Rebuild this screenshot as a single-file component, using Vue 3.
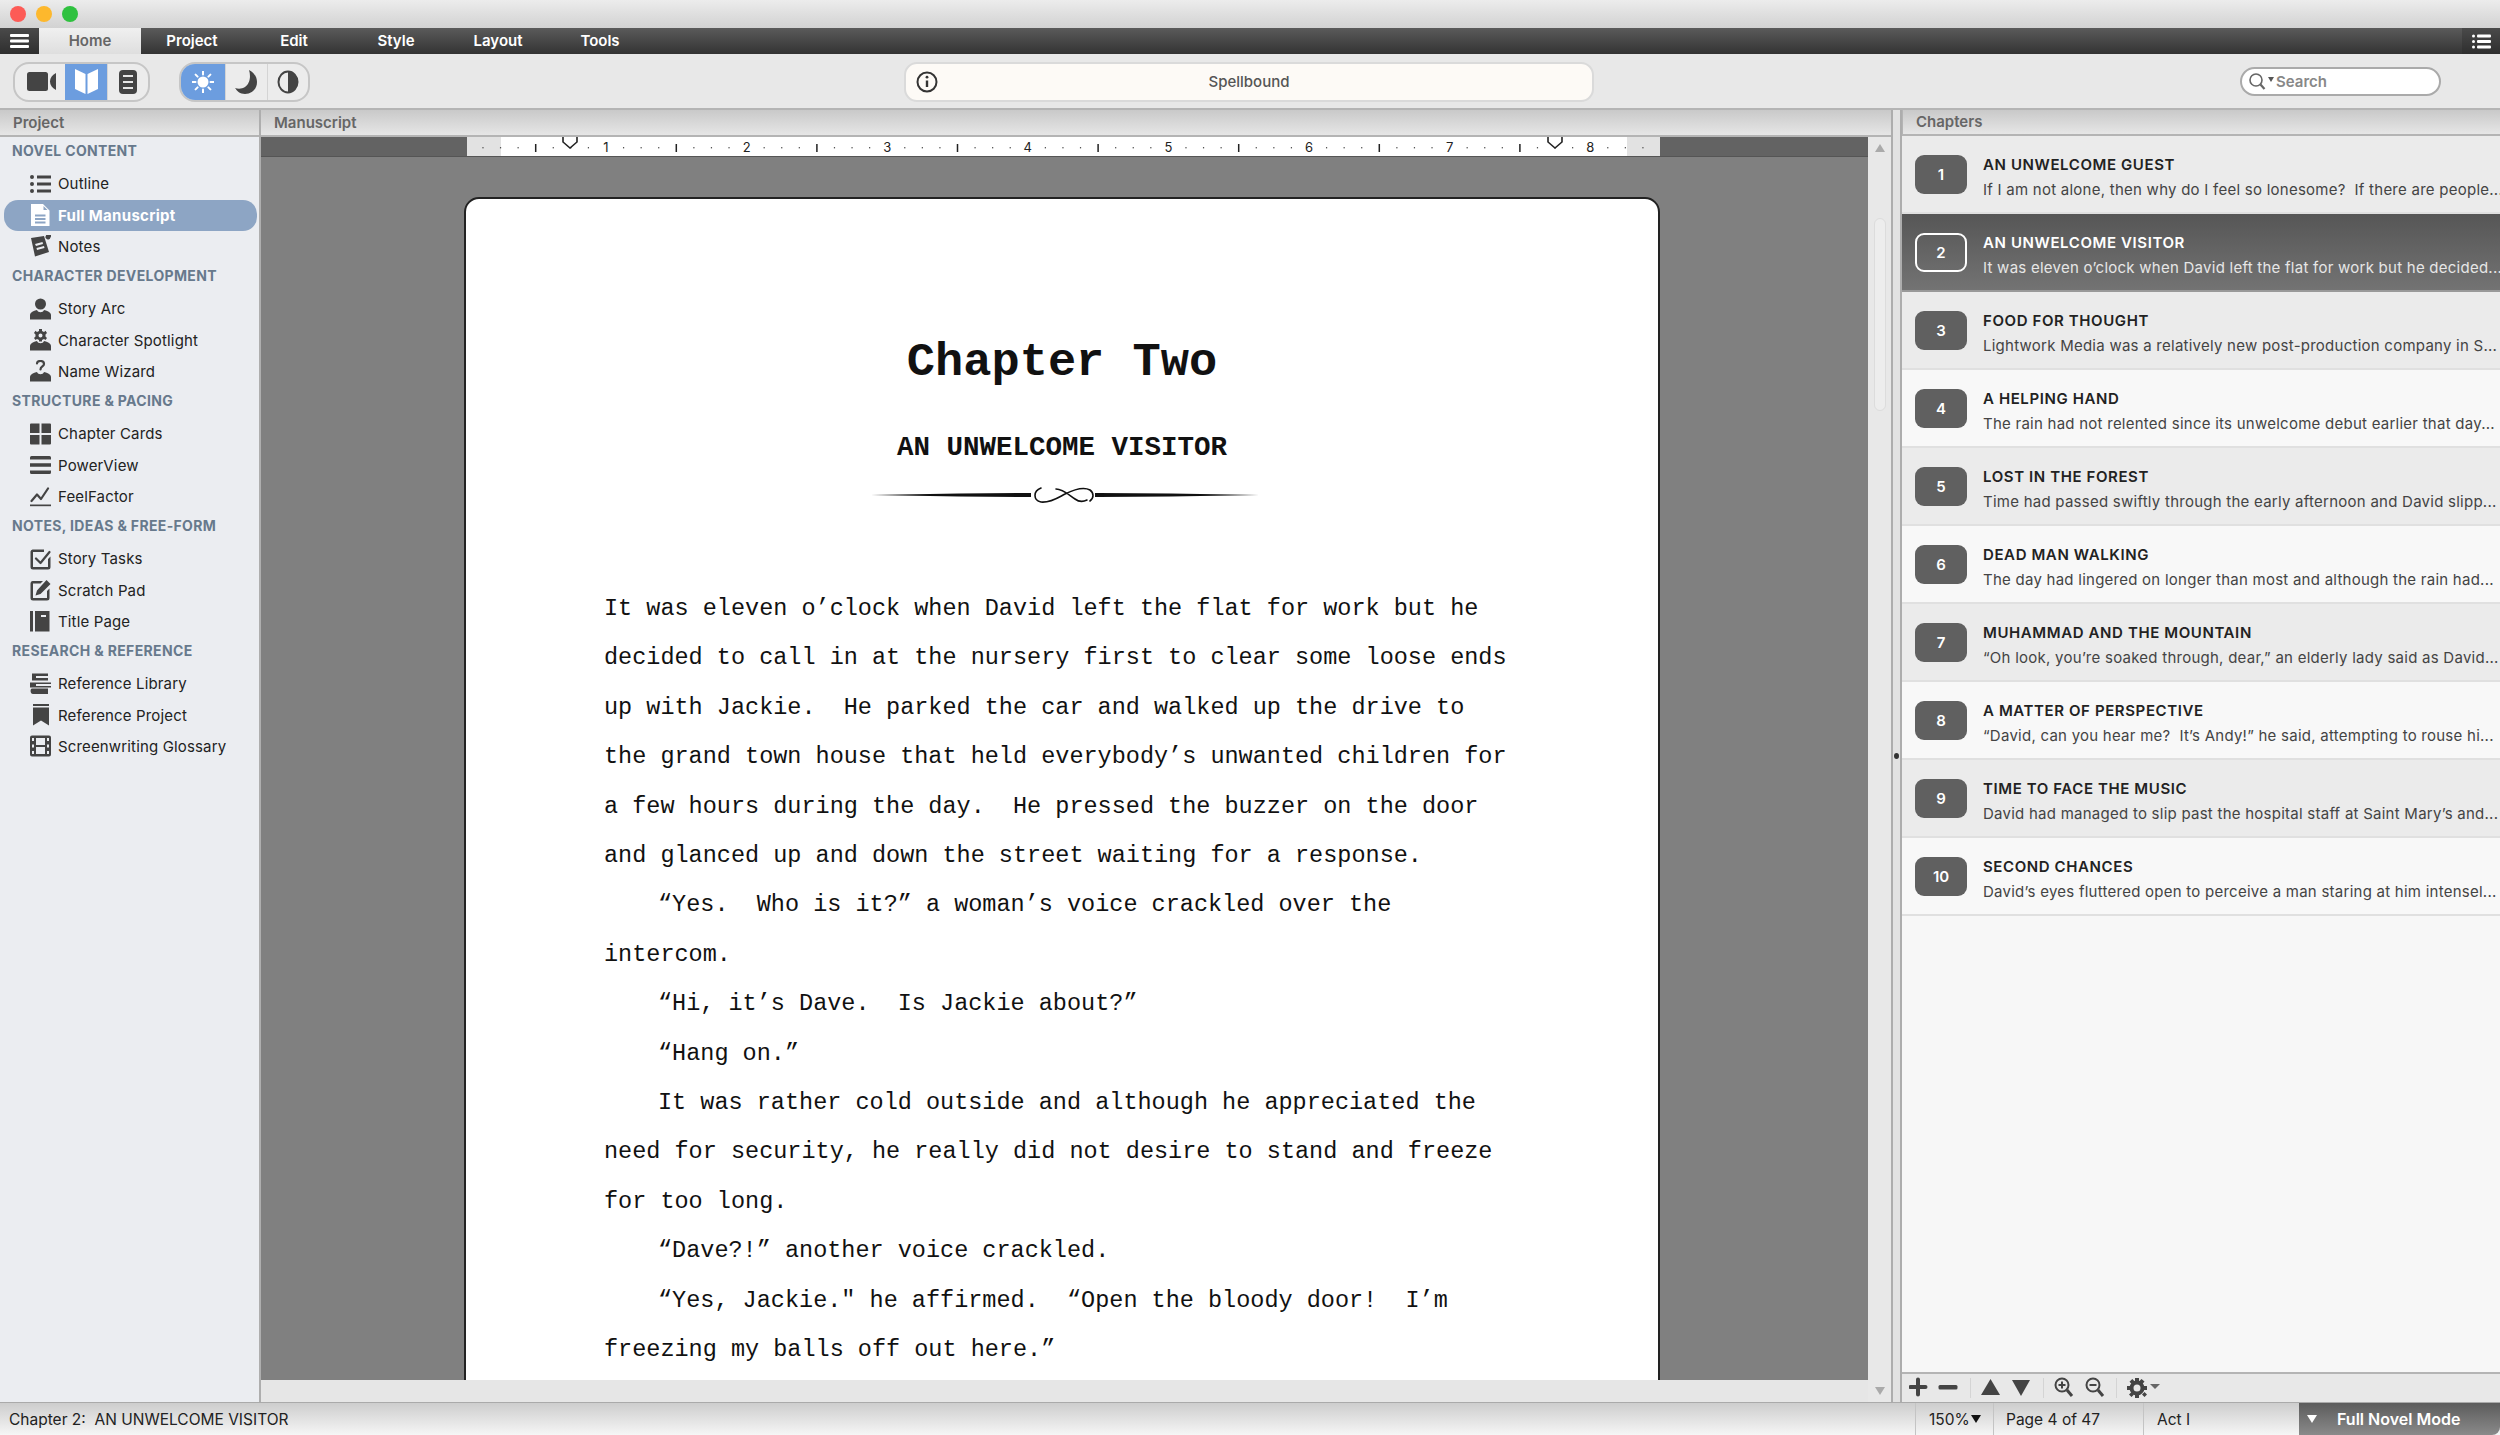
<template>
  <div class="app">
    <div class="titlebar">
      <i class="light light--red"></i>
      <i class="light light--yellow"></i>
      <i class="light light--green"></i>
    </div>

    <div class="ribbon">
      <div class="ribbon__menu">
        <svg width="19" height="14" viewBox="0 0 19 14" fill="#fff"><rect width="19" height="3" rx="1"/><rect y="5.5" width="19" height="3" rx="1"/><rect y="11" width="19" height="3" rx="1"/></svg>
      </div>
      <div v-for="t in tabs" :key="t" class="ribbon__tab" :class="{ 'ribbon__tab--on': t === 'Home' }">{{ t }}</div>
      <div class="ribbon__list">
        <svg width="19" height="15" viewBox="0 0 19 15" fill="#fff"><circle cx="1.5" cy="2" r="1.5"/><circle cx="1.5" cy="7.5" r="1.5"/><circle cx="1.5" cy="13" r="1.5"/><rect x="5" y="0.5" width="14" height="3" rx="1"/><rect x="5" y="6" width="14" height="3" rx="1"/><rect x="5" y="11.5" width="14" height="3" rx="1"/></svg>
      </div>
    </div>

    <div class="toolbar">
      <div class="seg seg--view">
        <div class="seg__cell seg__cell--w1">
          <svg width="29" height="19" viewBox="0 0 29 19" fill="#444"><rect width="21" height="19" rx="2.5"/><path d="M29 1C25 3 23 6 23 9.500C23 13 25 16 29 18Z"/></svg>
        </div>
        <div class="seg__cell seg__cell--w2 seg__cell--on">
          <svg width="23" height="25" viewBox="0 0 23 25" fill="#fff"><path d="M0 0L10.5 5V25L0 20Z"/><path d="M23 0L12.5 5V25L23 20Z"/></svg>
        </div>
        <div class="seg__cell seg__cell--w3">
          <svg width="18" height="24" viewBox="0 0 18 24"><rect width="18" height="24" rx="4" fill="#444"/><g fill="#e6e6e6"><rect x="4" y="5" width="10" height="2"/><rect x="4" y="11" width="10" height="2"/><rect x="4" y="17" width="10" height="2"/></g></svg>
        </div>
      </div>
      <div class="seg seg--mode">
        <div class="seg__cell seg__cell--w4 seg__cell--on">
          <svg width="22" height="22" viewBox="0 0 22 22" fill="#fff" stroke="#fff"><circle cx="11" cy="11" r="5.5" stroke="none"/><path d="M11 0.5V3.5M11 18.5V21.5M0.5 11H3.5M18.5 11H21.5M3.6 3.6L5.6 5.6M16.4 16.4L18.4 18.4M3.6 18.4L5.6 16.4M16.4 5.6L18.4 3.6" stroke-width="2" stroke-linecap="round"/></svg>
        </div>
        <div class="seg__cell seg__cell--w5">
          <svg width="22" height="24" viewBox="0 0 22 24" fill="#444"><path d="M14 0C20 3 22 8 22 12C22 19 17 24 10 24C5 24 2 21 0 18C3 19 7 19 10 17C15 14 16 6 14 0Z"/></svg>
        </div>
        <div class="seg__cell seg__cell--w5">
          <svg width="22" height="24" viewBox="0 0 22 24"><ellipse cx="11" cy="12" rx="9.5" ry="10.5" fill="none" stroke="#444" stroke-width="2"/><path d="M11 1.5A9.5 10.5 0 0 1 11 22.5Z" fill="#444"/></svg>
        </div>
      </div>
      <div class="banner">
        <svg class="banner__icon" width="22" height="22" viewBox="0 0 22 22" fill="none" stroke="#333"><circle cx="11" cy="11" r="9.5" stroke-width="2"/><path d="M11 9.5V16" stroke-width="2.4"/><circle cx="11" cy="6.2" r="1.4" fill="#333" stroke="none"/></svg>
        <span class="banner__text">Spellbound</span>
      </div>
      <div class="search">
        <svg width="26" height="20" viewBox="0 0 26 20" fill="none" stroke="#666"><circle cx="8" cy="8" r="6" stroke-width="1.6"/><path d="M12.5 12.5L16.5 17" stroke-width="2.2"/><path d="M20 5H26L23 10Z" fill="#555" stroke="none"/></svg>
        <span>Search</span>
      </div>
    </div>

    <div class="main">
      <aside class="project">
        <div class="head head--project">Project</div>
        <div class="nav">
          <section v-for="g in nav" :key="g.title">
            <div class="nav__title">{{ g.title }}</div>
            <div v-for="it in g.items" :key="it.label" class="nav__item" :class="{ 'nav__item--on': it.label === 'Full Manuscript' }">
              <svg class="nav__icon" width="21" height="22" viewBox="0 0 21 22">
                <path v-if="icons[it.icon].f" :d="icons[it.icon].f" fill="currentColor" fill-rule="evenodd"/>
                <path v-if="icons[it.icon].s" :d="icons[it.icon].s" fill="none" stroke="currentColor" stroke-width="2.2" stroke-linecap="round" stroke-linejoin="round"/>
              </svg>
              <span>{{ it.label }}</span>
            </div>
          </section>
        </div>
      </aside>

      <div class="manuscript">
        <div class="head head--manuscript">Manuscript</div>
        <div class="manuscript__body">
          <div class="editor">
            <div class="ruler-strip">
              <svg class="ruler" width="1193" height="19" viewBox="0 0 1193 19">
                <rect width="1193" height="19" fill="#fff"/>
                <rect width="34" height="19" fill="#e2e2e2"/>
                <rect x="1160" width="33" height="19" fill="#e2e2e2"/>
                <template v-for="m in rulerMarks" :key="m.x">
                  <text v-if="m.kind === 'digit'" :x="m.x" y="15" text-anchor="middle" class="ruler__digit">{{ m.label }}</text>
                  <rect v-else-if="m.kind === 'tick'" :x="m.x - 0.75" y="7" width="1.5" height="8" fill="#222"/>
                  <rect v-else :x="m.x - 0.6" y="10" width="1.2" height="1.4" fill="#555"/>
                </template>
                <path d="M96 0V5L103 11L110 5V0" fill="#fff" stroke="#222" stroke-width="1.6"/>
                <path d="M1081 0V5L1088 11L1095 5V0" fill="#fff" stroke="#222" stroke-width="1.6"/>
              </svg>
            </div>
            <div class="desk">
              <div class="page">
                <h1 class="page__chapter">Chapter Two</h1>
                <h2 class="page__title">AN UNWELCOME VISITOR</h2>
                <svg class="page__rule" width="392" height="20" viewBox="0 0 392 20">
                  <path d="M2 10L90 8.6L158 8H162V12H158L90 11.4Z" fill="#111"/>
                  <path d="M390 10L302 8.6L230 8H226V12H230L302 11.4Z" fill="#111"/>
                  <path d="M172 3C164 6 164 15 172 17C182 18 190 12 196 9C204 5 214 1 221 5C225 8 225 13 221 16M187 4C194 4 200 10 206 14C210 17 214 17 218 15" fill="none" stroke="#111" stroke-width="1.6" stroke-linecap="round"/>
                </svg>
                <div class="page__text">
                  <div v-for="(l, i) in lines" :key="i" class="page__line" :class="{ 'page__line--indent': l.startsWith(' ') }">{{ l.trimStart() }}</div>
                </div>
              </div>
            </div>
          </div>
          <div class="vscroll">
            <span class="arrow arrow--up"></span>
            <div class="vscroll__track"><div class="vscroll__thumb"></div></div>
            <span class="arrow arrow--down"></span>
          </div>
        </div>
      </div>

      <div class="divider"><i class="divider__grip"></i></div>

      <aside class="chapters">
        <div class="head head--chapters">Chapters</div>
        <div class="chapters__list">
          <div v-for="(c, i) in chapters" :key="c.title" class="chapter" :class="{ 'chapter--on': i === 1, 'chapter--alt': i % 2 === 0 }">
            <div class="chapter__num">{{ i + 1 }}</div>
            <div class="chapter__text">
              <div class="chapter__title">{{ c.title }}</div>
              <div class="chapter__sub">{{ c.sub }}</div>
            </div>
          </div>
        </div>
        <div class="chapters__tools">
          <svg width="255" height="24" viewBox="0 0 255 24" fill="#444">
            <path d="M6 4.5a2 2 0 0 1 4 0V10h5.5a2 2 0 0 1 0 4H10v5.500a2 2 0 0 1-4 0V14H.5a2 2 0 0 1 0-4H6Z" transform="translate(1 0)"/>
            <rect x="29.500" y="10" width="19" height="4.500" rx="1.500"/>
            <g transform="translate(6 0)">
              <rect x="55" y="3" width="1" height="20" fill="#d4d4d4"/>
              <path d="M66 20L75.500 4L85 20Z"/>
              <path d="M97 5H115L106 21Z"/>
              <rect x="128" y="3" width="1" height="20" fill="#d4d4d4"/>
              <g fill="none" stroke="#444">
                <circle cx="147" cy="10" r="6.500" stroke-width="2"/>
                <path d="M152 15L157 21" stroke-width="3"/>
                <path d="M143.500 10H150.500M147 6.500V13.500" stroke-width="2"/>
                <circle cx="178" cy="10" r="6.500" stroke-width="2"/>
                <path d="M183 15L188 21" stroke-width="3"/>
                <path d="M174.500 10H181.500" stroke-width="2"/>
              </g>
              <rect x="201" y="3" width="1" height="20" fill="#d4d4d4"/>
              <g transform="translate(213 3)">
                <circle cx="9" cy="10" r="5.500" fill="none" stroke="#444" stroke-width="4"/>
                <path d="M7 0H11V4H7ZM7 16H11V20H7ZM-1 8H3V12H-1ZM15 8H19V12H15ZM1.500 3.800L4.300 1L7 3.800L4.300 6.500ZM14 16.500L16.500 14L19 16.500L16.500 19ZM1 16.500L3.500 14L6 16.500L3.500 19ZM11 3.500L13.500 1L16.500 3.500L14 6.500Z"/>
              </g>
              <path d="M235 9H245L240 14Z" fill="#666"/>
            </g>
          </svg>
        </div>
      </aside>
    </div>

    <div class="status">
      <div class="status__chapter">{{ statusText }}</div>
      <div class="status__cell status__cell--zoom">150%<i class="status__caret"></i></div>
      <div class="status__cell status__cell--page">Page 4 of 47</div>
      <div class="status__cell status__cell--act">Act I</div>
      <div class="status__mode"><i class="status__modecaret"></i>Full Novel Mode</div>
    </div>
  </div>
</template>

<script setup>
const tabs = ['Home', 'Project', 'Edit', 'Style', 'Layout', 'Tools']
const statusText = 'Chapter 2:  AN UNWELCOME VISITOR'

const person = 'M0 21.500V17C0 14 5 12.500 7 12C8 15 13 15 14 12C16 12.500 21 14 21 17V21.500Z'

const icons = {
  outline: { f: 'M0 4a2 2 0 1 0 4 0a2 2 0 1 0-4 0ZM0 11a2 2 0 1 0 4 0a2 2 0 1 0-4 0ZM0 18a2 2 0 1 0 4 0a2 2 0 1 0-4 0ZM7 2.500H21V5.500H7ZM7 9.500H21V12.500H7ZM7 16.500H21V19.500H7Z' },
  doc: { f: 'M1 0H13L19.500 6.500V22H1ZM5 10.500V12.500H15.500V10.500ZM5 14V16H15.500V14ZM5 17.500V19.500H15.500V17.500ZM13.500 2V6H17.500Z' },
  note: { f: 'M1 3L14 1L19 17L5 21.500ZM5 9L6 11L13 9L12.500 7ZM6.500 13L7 15L14.500 13L14 11ZM16 0.500a2.500 2.500 0 1 0 4.500 2a2.500 2.500 0 1 0-4.500-2Z' },
  person: { f: person + 'M5 6a5.500 5.500 0 1 0 11 0a5.500 5.500 0 1 0-11 0Z' },
  spot: { f: person + 'M9 0H12V2L14 3L15.500 1.800L17 4L15.500 5.500V7.500L17 9L15.500 11L14 10L12 11V12.500H9V11L7 10L5.500 11L4 9L5.500 7.500V5.500L4 4L5.500 1.800L7 3L9 2ZM8.500 6.500a2 2 0 1 0 4 0a2 2 0 1 0-4 0Z' },
  wizard: { f: person, s: 'M7 3.500C7 0 14 0 14 4C14 6.500 10.500 6.500 10.500 9.500' },
  cards: { f: 'M0 1.500A1 1 0 0 1 1 .5H9.500V10H0ZM11.500 .5H20A1 1 0 0 1 21 1.500V10H11.500ZM0 12H9.500V21.500H1A1 1 0 0 1 0 20.500ZM11.500 12H21V20.500A1 1 0 0 1 20 21.500H11.500Z' },
  power: { f: 'M0 3.500A1.500 1.500 0 0 1 1.500 2H19.500A1.500 1.500 0 0 1 21 3.500V5.500H0ZM0 9.300H21V12.700H0ZM0 16.500H21V18.500A1.500 1.500 0 0 1 19.500 20H1.500A1.500 1.500 0 0 1 0 18.500Z' },
  feel: { f: 'M0 19.500H21V21.200H0Z', s: 'M1.500 16L7 9.500L11 14L18 3.500' },
  tasks: { f: 'M2.500 1.500H14V4H3V19H18V11L20.500 8.500V19A2.500 2.500 0 0 1 18 21.500H3A2.500 2.500 0 0 1 .5 19V3.500A2.500 2.500 0 0 1 2.500 1.500Z', s: 'M6 10.500L10.500 15L19.500 4' },
  pad: { f: 'M2.500 2H13L10.500 4.500H3V19H17V12L19.500 9.500V19A2.500 2.500 0 0 1 17 21.500H3A2.500 2.500 0 0 1 .5 19V4.500A2.500 2.500 0 0 1 2.500 2ZM16.500 1L20.500 5L10.500 15L5.500 16.500L7 11.500Z' },
  title: { f: 'M0 1H3V21.500H0ZM5 1H19.500V21.500H5ZM11 5V7H16V5Z' },
  library: { f: 'M2 .5H18V3H6V5H18V7.500H2ZM0 9.500H21V11H6V13H21V14.500H0ZM2 15.500H18V21H3C0 21 0 15.500 2 15.500Z' },
  bookmark: { f: 'M3 0H19V2H3ZM3 3.500H19V21.500L11 16.500L3 21.500Z' },
  film: { f: 'M2 .5H19A2 2 0 0 1 21 2.500V19.500A2 2 0 0 1 19 21.500H2A2 2 0 0 1 0 19.500V2.500A2 2 0 0 1 2 .5ZM2 3V6H4V3ZM2 9.500V12.500H4V9.500ZM2 16V19H4V16ZM17 3V6H19V3ZM17 9.500V12.500H19V9.500ZM17 16V19H19V16ZM6 3V10H15V3ZM6 12V19H15V12Z' },
}

const nav = [
  { title: 'NOVEL CONTENT', items: [
    { label: 'Outline', icon: 'outline' },
    { label: 'Full Manuscript', icon: 'doc' },
    { label: 'Notes', icon: 'note' },
  ] },
  { title: 'CHARACTER DEVELOPMENT', items: [
    { label: 'Story Arc', icon: 'person' },
    { label: 'Character Spotlight', icon: 'spot' },
    { label: 'Name Wizard', icon: 'wizard' },
  ] },
  { title: 'STRUCTURE & PACING', items: [
    { label: 'Chapter Cards', icon: 'cards' },
    { label: 'PowerView', icon: 'power' },
    { label: 'FeelFactor', icon: 'feel' },
  ] },
  { title: 'NOTES, IDEAS & FREE-FORM', items: [
    { label: 'Story Tasks', icon: 'tasks' },
    { label: 'Scratch Pad', icon: 'pad' },
    { label: 'Title Page', icon: 'title' },
  ] },
  { title: 'RESEARCH & REFERENCE', items: [
    { label: 'Reference Library', icon: 'library' },
    { label: 'Reference Project', icon: 'bookmark' },
    { label: 'Screenwriting Glossary', icon: 'film' },
  ] },
]

// eighth-inch marks along the ruler
const rulerMarks = []
for (let k = 1; k <= 67; k++) {
  const x = k * 17.575 - 1.6
  if (k % 8 === 0) rulerMarks.push({ x, kind: 'digit', label: k / 8 })
  else if (k % 4 === 0) rulerMarks.push({ x, kind: 'tick' })
  else rulerMarks.push({ x, kind: 'dot' })
}

const lines = [
  'It was eleven o’clock when David left the flat for work but he',
  'decided to call in at the nursery first to clear some loose ends',
  'up with Jackie.  He parked the car and walked up the drive to',
  'the grand town house that held everybody’s unwanted children for',
  'a few hours during the day.  He pressed the buzzer on the door',
  'and glanced up and down the street waiting for a response.',
  '    “Yes.  Who is it?” a woman’s voice crackled over the',
  'intercom.',
  '    “Hi, it’s Dave.  Is Jackie about?”',
  '    “Hang on.”',
  '    It was rather cold outside and although he appreciated the',
  'need for security, he really did not desire to stand and freeze',
  'for too long.',
  '    “Dave?!” another voice crackled.',
  '    “Yes, Jackie." he affirmed.  “Open the bloody door!  I’m',
  'freezing my balls off out here.”',
]

const chapters = [
  { title: 'AN UNWELCOME GUEST', sub: 'If I am not alone, then why do I feel so lonesome?  If there are people...' },
  { title: 'AN UNWELCOME VISITOR', sub: 'It was eleven o’clock when David left the flat for work but he decided...' },
  { title: 'FOOD FOR THOUGHT', sub: 'Lightwork Media was a relatively new post-production company in S...' },
  { title: 'A HELPING HAND', sub: 'The rain had not relented since its unwelcome debut earlier that day...' },
  { title: 'LOST IN THE FOREST', sub: 'Time had passed swiftly through the early afternoon and David slipp...' },
  { title: 'DEAD MAN WALKING', sub: 'The day had lingered on longer than most and although the rain had...' },
  { title: 'MUHAMMAD AND THE MOUNTAIN', sub: '“Oh look, you’re soaked through, dear,” an elderly lady said as David...' },
  { title: 'A MATTER OF PERSPECTIVE', sub: '“David, can you hear me?  It’s Andy!” he said, attempting to rouse hi...' },
  { title: 'TIME TO FACE THE MUSIC', sub: 'David had managed to slip past the hospital staff at Saint Mary’s and...' },
  { title: 'SECOND CHANCES', sub: 'David’s eyes fluttered open to perceive a man staring at him intensel...' },
]
</script>

<style>
html, body { margin: 0; background: #e8e8e8; }
</style>

<style scoped>
.app {
  width: 2500px;
  height: 1435px;
  display: flex;
  flex-direction: column;
  overflow: hidden;
  font-family: Inter, Roboto, 'Liberation Sans', sans-serif;
  color: #222;
}

.titlebar {
  height: 28px;
  flex: none;
  display: flex;
  align-items: center;
  gap: 10px;
  padding-left: 10px;
  box-sizing: border-box;
  background: linear-gradient(#ececec, #d2d2d2);
}
.light { width: 16px; height: 16px; border-radius: 50%; }
.light--red { background: #fd5b56; }
.light--yellow { background: #fdb82d; }
.light--green { background: #2fc13f; }

.ribbon {
  height: 26px;
  flex: none;
  display: flex;
  background: linear-gradient(#5a5a5a, #333);
}
.ribbon__menu {
  width: 39px;
  display: flex;
  align-items: center;
  justify-content: center;
  background: linear-gradient(#4a4a4a, #2e2e2e);
}
.ribbon__tab {
  width: 102px;
  text-align: center;
  font-size: 15px;
  font-weight: 600;
  line-height: 26px;
  color: #fff;
}
.ribbon__tab--on {
  color: #666;
  background: linear-gradient(#f0f0f0, #dedede);
}
.ribbon__list {
  margin-left: auto;
  width: 38px;
  display: flex;
  align-items: center;
  justify-content: center;
  background: linear-gradient(#4a4a4a, #2e2e2e);
}

.toolbar {
  height: 56px;
  flex: none;
  box-sizing: border-box;
  padding: 8px 59px 7px 13px;
  display: flex;
  align-items: center;
  background: #e8e8e8;
  border-bottom: 2px solid #b4b4b4;
}
.seg {
  height: 40px;
  box-sizing: border-box;
  display: flex;
  overflow: hidden;
  border: 2px solid #c6c6c6;
  border-radius: 16px;
  background: #ececec;
}
.seg--view { width: 137px; }
.seg--mode { width: 131px; margin-left: 29px; }
.seg__cell {
  display: flex;
  align-items: center;
  justify-content: center;
  box-sizing: border-box;
  border-left: 1px solid #d4d4d4;
}
.seg__cell:first-child { border-left: 0; }
.seg__cell--w1 { width: 50px; padding-left: 2px; }
.seg__cell--w2 { width: 42px; }
.seg__cell--w3 { flex: 1; }
.seg__cell--w4 { width: 44px; }
.seg__cell--w5 { flex: 1; }
.seg__cell--on { background: #6c9ddf; border-left: 0; }

.banner {
  position: relative;
  width: 690px;
  height: 40px;
  margin-left: 594px;
  box-sizing: border-box;
  display: flex;
  align-items: center;
  justify-content: center;
  background: #fdfaf6;
  border: 2px solid #dadada;
  border-radius: 13px;
}
.banner__icon { position: absolute; left: 10px; top: 7px; }
.banner__text { font-size: 15px; font-weight: 500; color: #555; }

.search {
  width: 201px;
  height: 29px;
  margin-left: auto;
  box-sizing: border-box;
  padding-left: 6px;
  display: flex;
  align-items: center;
  gap: 2px;
  background: #fff;
  border: 2px solid #aaa;
  border-radius: 15px;
  font-size: 15px;
  font-weight: 600;
  color: #888;
}

.main {
  flex: 1;
  min-height: 0;
  display: flex;
}

.head {
  flex: none;
  box-sizing: border-box;
  background: linear-gradient(#c9c9c9, #e6e6e6);
  font-size: 15px;
  font-weight: 600;
  color: #666;
  border-bottom: 2px solid #b4b4b4;
}
.head--project { height: 27px; line-height: 25px; padding-left: 13px; }
.head--manuscript { height: 27px; line-height: 25px; padding-left: 13px; }
.head--chapters { height: 26px; line-height: 24px; padding-left: 13px; border-left: 1px solid #b4b4b4; }

.project {
  width: 261px;
  flex: none;
  box-sizing: border-box;
  display: flex;
  flex-direction: column;
  border-right: 2px solid #aeaeae;
  background: #ebedf1;
}
.nav { flex: 1; }
.nav__title {
  height: 31.25px;
  line-height: 28px;
  padding-left: 12px;
  font-size: 14px;
  font-weight: 700;
  letter-spacing: 0.35px;
  color: #67798c;
  white-space: nowrap;
}
.nav__item {
  height: 31.25px;
  margin: 0 2px 0 4px;
  box-sizing: border-box;
  padding-left: 26px;
  display: flex;
  align-items: center;
  gap: 7px;
  font-size: 15px;
  letter-spacing: 0.15px;
  color: #222;
  white-space: nowrap;
  border-radius: 14px;
}
.nav__icon { color: #444; flex: none; }
.nav__item--on { background: #8da5c4; color: #fff; font-weight: 700; letter-spacing: 0.3px; }
.nav__item--on .nav__icon { color: #fff; }

.manuscript {
  width: 1630px;
  flex: none;
  display: flex;
  flex-direction: column;
}
.manuscript__body {
  flex: 1;
  min-height: 0;
  display: flex;
}
.editor {
  width: 1607px;
  flex: none;
  display: flex;
  flex-direction: column;
  border-bottom: 22px solid #e6e6e6;
  box-sizing: border-box;
  background: #808080;
}
.ruler-strip {
  height: 20px;
  flex: none;
  background: #636363;
  border-bottom: 1px solid #555;
  box-sizing: border-box;
  padding-left: 206px;
}
.ruler { display: block; }
.ruler__digit { font: 400 13px Inter, Roboto, sans-serif; fill: #222; }
.desk {
  flex: 1;
  min-height: 0;
  overflow: hidden;
  padding: 40px 0 0 203px;
}
.page {
  width: 1196px;
  height: 1300px;
  box-sizing: border-box;
  padding: 0 0 0 138px;
  background: #fff;
  border: 2px solid #222;
  border-radius: 15px 15px 0 0;
  color: #111;
  font-family: 'Liberation Mono', 'Courier New', monospace;
}
.page__chapter {
  margin: 0 0 0 -138px;
  padding-top: 136px;
  text-align: center;
  font-size: 47px;
  font-weight: 700;
  line-height: 56px;
}
.page__title {
  margin: 41px 0 0 -138px;
  text-align: center;
  font-size: 27.500px;
  font-weight: 700;
  line-height: 32px;
}
.page__rule {
  display: block;
  margin: 21px 0 0 265px;
}
.page__text {
  margin-top: 79px;
  font-size: 23.500px;
}
.page__line {
  height: 49.420px;
  line-height: 49.420px;
  white-space: pre;
}
.page__line--indent { padding-left: 54px; }

.vscroll {
  flex: 1;
  display: flex;
  flex-direction: column;
  align-items: center;
  background: #e8e8e8;
}
.vscroll__track { flex: 1; width: 100%; }
.vscroll__thumb {
  width: 12px;
  height: 193px;
  margin: 66px 0 0 6px;
  box-sizing: border-box;
  background: #ededed;
  border: 1px solid #dcdcdc;
  border-radius: 6px;
}
.arrow { width: 0; height: 0; flex: none; border-left: 5px solid transparent; border-right: 5px solid transparent; }
.arrow--up { margin-top: 7px; border-bottom: 8px solid #aaa; }
.arrow--down { margin-bottom: 7px; border-top: 8px solid #aaa; }

.divider {
  position: relative;
  width: 11px;
  flex: none;
  box-sizing: border-box;
  background: #e2e2e2;
  border-left: 2px solid #adadad;
  border-right: 2px solid #adadad;
}
.divider__grip {
  position: absolute;
  left: 1px;
  top: 643px;
  width: 5px;
  height: 6px;
  border-radius: 50%;
  background: #333;
}

.chapters {
  flex: 1;
  min-width: 0;
  display: flex;
  flex-direction: column;
}
.chapters__list {
  flex: 1;
  min-height: 0;
  background: #f7f7f7;
  overflow: hidden;
}
.chapter {
  height: 78px;
  box-sizing: border-box;
  display: flex;
  align-items: center;
  padding-left: 13px;
  background: #f8f8f8;
  border-bottom: 2px solid #e0e0e0;
}
.chapter--alt { background: #ebebeb; }
.chapter--on {
  background: linear-gradient(#565656, #737373);
  border-bottom-color: #999;
}
.chapter__num {
  width: 52px;
  height: 39px;
  flex: none;
  margin-right: 16px;
  box-sizing: border-box;
  display: flex;
  align-items: center;
  justify-content: center;
  background: #606060;
  border-radius: 9px;
  font-size: 15px;
  font-weight: 600;
  color: #fff;
}
.chapter--on .chapter__num {
  background: transparent;
  border: 2px solid #fff;
}
.chapter__text { flex: 1; min-width: 0; padding-top: 6px; }
.chapter__title {
  font-size: 15px;
  line-height: 25px;
  font-weight: 600;
  letter-spacing: 0.6px;
  color: #222;
  white-space: nowrap;
}
.chapter__sub {
  font-size: 15px;
  line-height: 25px;
  letter-spacing: 0.25px;
  color: #444;
  white-space: pre;
  overflow: hidden;
}
.chapter--on .chapter__title { color: #fff; }
.chapter--on .chapter__sub { color: #e6e6e6; }
.chapters__tools {
  height: 30px;
  flex: none;
  box-sizing: border-box;
  padding: 1px 0 0 7px;
  background: #e8e8e8;
  border-top: 2px solid #b4b4b4;
}
.chapters__tools svg { display: block; }

.status {
  height: 33px;
  flex: none;
  box-sizing: border-box;
  display: flex;
  align-items: center;
  background: linear-gradient(#cdcdcd, #f6f6f6);
  border-top: 1px solid #aaa;
  font-size: 15.500px;
  color: #222;
}
.status__chapter { flex: 1; padding-left: 9px; white-space: pre; }
.status__cell {
  height: 100%;
  box-sizing: border-box;
  display: flex;
  align-items: center;
  padding-left: 13px;
  border-left: 1px solid #c4c4c4;
}
.status__cell--zoom { width: 78px; }
.status__cell--page { width: 150px; padding-left: 12px; }
.status__cell--act { width: 156px; }
.status__caret {
  margin-left: 1px;
  border-left: 5px solid transparent;
  border-right: 5px solid transparent;
  border-top: 8px solid #111;
}
.status__mode {
  width: 201px;
  height: 100%;
  box-sizing: border-box;
  display: flex;
  align-items: center;
  padding-left: 8px;
  font-weight: 600;
  font-size: 16px;
  color: #fff;
  border-bottom-right-radius: 8px;
  background: linear-gradient(#5c5c5c, #8a8a8a);
}
.status__modecaret {
  margin-right: 20px;
  border-left: 5px solid transparent;
  border-right: 5px solid transparent;
  border-top: 8px solid #fff;
}
</style>
